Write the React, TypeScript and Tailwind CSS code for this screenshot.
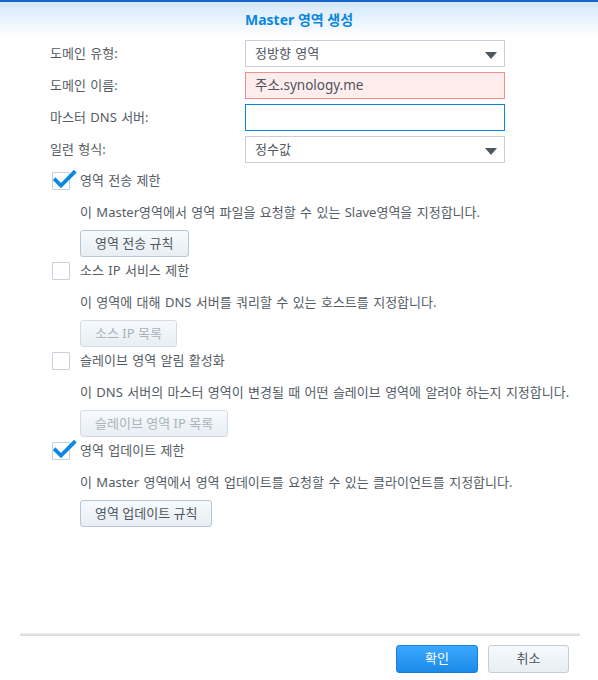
import React from "react";

const font = {fontFamily: '"Noto Sans", "Noto Sans CJK KR", sans-serif'};

type Section = {
    label: string;
    checked: boolean;
    desc: string;
    button: string;
};

const sections: Section[] = [
    {label: "영역 전송 제한", checked: true, desc: "이 Master영역에서 영역 파일을 요청할 수 있는 Slave영역을 지정합니다.", button: "영역 전송 규칙"},
    {label: "소스 IP 서비스 제한", checked: false, desc: "이 영역에 대해 DNS 서버를 쿼리할 수 있는 호스트를 지정합니다.", button: "소스 IP 목록"},
    {label: "슬레이브 영역 알림 활성화", checked: false, desc: "이 DNS 서버의 마스터 영역이 변경될 때 어떤 슬레이브 영역에 알려야 하는지 지정합니다.", button: "슬레이브 영역 IP 목록"},
    {label: "영역 업데이트 제한", checked: true, desc: "이 Master 영역에서 영역 업데이트를 요청할 수 있는 클라이언트를 지정합니다.", button: "영역 업데이트 규칙"},
];

function Arrow() {
    return (
        <svg width="12" height="7" viewBox="0 0 12 7" className="absolute right-[7px] top-[11px]">
            <path d="M0 0 H12 L6 7 Z" fill="#4f5861"/>
        </svg>
    );
}

function Checkbox({checked}: {checked: boolean}) {
    return (
        <div className="relative w-[18px] h-[18px] border border-[#c8d0d9] bg-white rounded-[1px] shrink-0">
            {checked ?
                <svg width="24" height="20" viewBox="0 0 24 20" className="absolute left-[0px] top-[-4px]">
                    <path d="M2.5 11 L8 16.5 L21 3.5" stroke="#0a88e6" strokeWidth="3.8" fill="none"
                          strokeLinecap="square"/>
                </svg> : <></>}
        </div>
    );
}

export default function App() {
    return (
        <div className="w-[598px] h-[680px] bg-white flex flex-col text-[13px] text-[#545c64] [word-spacing:1px]" style={font}>

            <header className="h-[37px] border-t-2 border-[#1565c8] bg-gradient-to-b from-[#d3e8fb] to-white flex items-center justify-center">
                <h1 className="text-[14px] font-bold text-[#0a86df] leading-none [word-spacing:0px]">Master 영역 생성</h1>
            </header>

            <main className="flex-1 pl-[50px] pt-[3px]">
                <div className="flex flex-col gap-[5px]">
                    <div className="flex items-center h-[27px]">
                        <span className="w-[195px]">도메인 유형:</span>
                        <div className="relative w-[260px] h-[27px] border border-[#c7cfd8] bg-white flex items-center px-[9px] text-[#4e565e]">
                            정방향 영역
                            <Arrow/>
                        </div>
                    </div>
                    <div className="flex items-center h-[27px]">
                        <span className="w-[195px]">도메인 이름:</span>
                        <div className="w-[260px] h-[27px] border border-[#f28e8e] bg-[#ffeded] flex items-center px-[9px] text-[13.5px] text-[#4e565e]">
                            주소.synology.me
                        </div>
                    </div>
                    <div className="flex items-center h-[27px]">
                        <span className="w-[195px]">마스터 DNS 서버:</span>
                        <div className="w-[260px] h-[27px] border border-[#0a86df] bg-white"/>
                    </div>
                    <div className="flex items-center h-[27px]">
                        <span className="w-[195px]">일련 형식:</span>
                        <div className="relative w-[260px] h-[27px] border border-[#c7cfd8] bg-white flex items-center px-[9px] text-[#4e565e]">
                            정수값
                            <Arrow/>
                        </div>
                    </div>
                </div>

                <div className="mt-[9px] flex flex-col gap-[5px]">
                    {sections.map((s: Section, index: React.Key) => {
                        const disabled = !s.checked;
                        return <section key={index} className="flex flex-col">
                            <label className="flex items-center gap-[10px] h-[18px] ml-[2px]">
                                <Checkbox checked={s.checked}/>
                                <span>{s.label}</span>
                            </label>
                            <p className="mt-[13px] ml-[30px] leading-[18px]">{s.desc}</p>
                            <button
                                className={`mt-[9px] ml-[30px] self-start h-[27px] px-[14px] rounded-[3px] border bg-gradient-to-b from-[#f7fafd] to-[#e8eef4] ${disabled ? "border-[#d3dce5] text-[#aab3bc]" : "border-[#b8c5d2] text-[#4e565e]"}`}>
                                {s.button}
                            </button>
                        </section>
                    })}
                </div>
            </main>

            <div className="ml-[20px] mr-[18px] h-[3px] bg-gradient-to-b from-[#f2f2f2] to-[#d5d5d5]"/>

            <footer className="flex justify-end gap-[10px] pr-[29px] pt-[9px] pb-[7px]">
                <button className="w-[82px] h-[28px] rounded-[3px] border border-[#1a7fd8] bg-gradient-to-b from-[#3aa8ff] to-[#1a8ae8] text-white text-[13px]">
                    확인
                </button>
                <button className="w-[81px] h-[28px] rounded-[3px] border border-[#c4ced8] bg-gradient-to-b from-[#f7fafd] to-[#e8eef4] text-[#4e565e] text-[13px]">
                    취소
                </button>
            </footer>

        </div>
    )
}
